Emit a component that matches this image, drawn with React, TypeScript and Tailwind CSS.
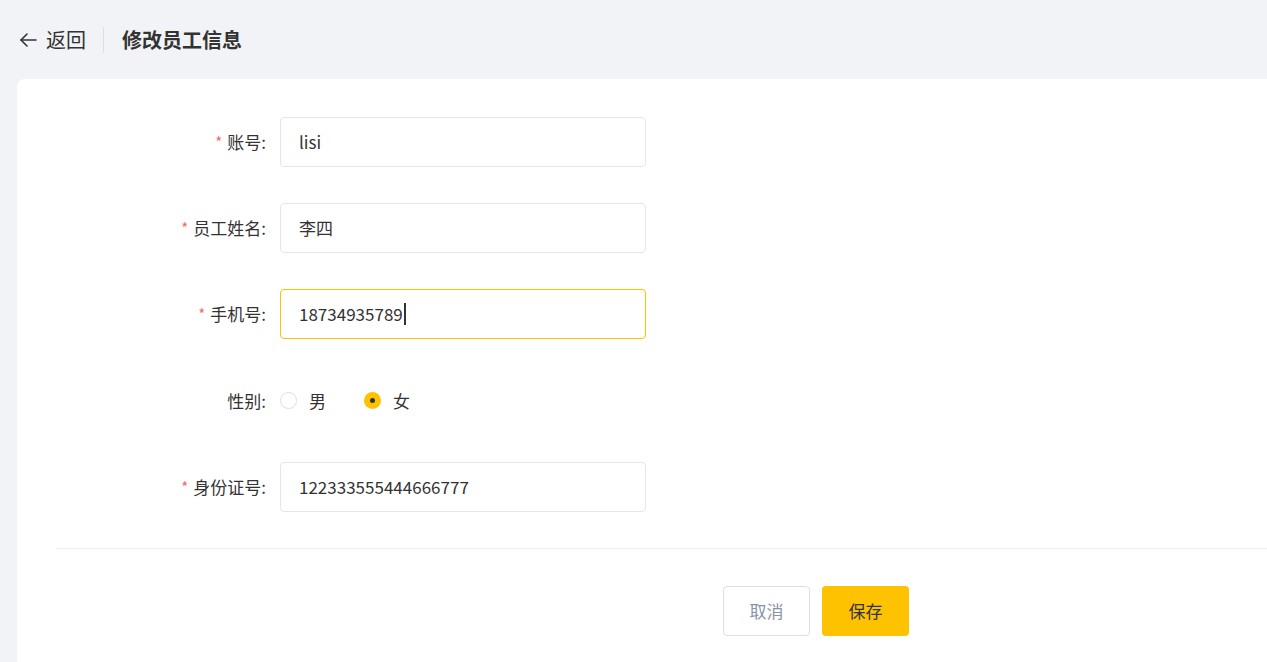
import React from 'react';

const font = { fontFamily: '"Noto Sans CJK SC", "Noto Sans", sans-serif' };

interface FieldProps {
  label: string;
  required?: boolean;
  tall?: boolean;
  children: React.ReactNode;
}

const Field: React.FC<FieldProps> = ({ label, required, tall, children }) => (
  <div className={`flex items-center ${tall ? 'h-[51px]' : 'h-[50px]'}`}>
    <div className="w-[249px] flex items-center justify-end text-[17px] text-[#333333]">
      {required && <span className="text-[#f56c6c] text-[15px] mr-[5px]">*</span>}
      <span>{label}:</span>
    </div>
    <div className="ml-[14px] flex items-center">{children}</div>
  </div>
);

const TextBox: React.FC<{ value: string; focused?: boolean }> = ({ value, focused }) => (
  <div
    className={`w-[366px] h-[50px] rounded-[4px] border flex items-center pl-[18px] text-[17px] text-[#333333] bg-white ${
      focused ? 'border-[#ffc200]' : 'border-[#e4e6eb]'
    }`}
  >
    <span>{value}</span>
    {focused && <span className="inline-block w-[2px] h-[22px] bg-[#333333] ml-[1px]" />}
  </div>
);

const Radio: React.FC<{ label: string; checked?: boolean }> = ({ label, checked }) => (
  <div className="flex items-center mr-[38px]">
    {checked ? (
      <span className="w-[17px] h-[17px] rounded-full bg-[#ffc200] flex items-center justify-center">
        <span className="w-[5px] h-[5px] rounded-full bg-[#333333]" />
      </span>
    ) : (
      <span className="w-[17px] h-[17px] rounded-full border border-[#dcdfe6] bg-white" />
    )}
    <span className="ml-[12px] text-[17px] text-[#333333]">{label}</span>
  </div>
);

export default function App() {
  return (
    <div className="w-full h-screen bg-[#f2f3f7] overflow-hidden" style={font}>
      <div className="h-[79px] flex items-center pl-[19px]">
        <svg width="18" height="16" viewBox="0 0 18 16" fill="none" stroke="#333333" strokeWidth="1.6" strokeLinecap="round" strokeLinejoin="round">
          <path d="M17 8H2" />
          <path d="M8 2L2 8l6 6" />
        </svg>
        <span className="ml-[9px] text-[20px] text-[#333333]">返回</span>
        <div className="w-px h-[26px] bg-[#dcdfe6] ml-[17px]" />
        <span className="ml-[18px] text-[20px] font-bold text-[#333333]">修改员工信息</span>
      </div>
      <div className="ml-[17px] w-[1598px] h-[583px] bg-white rounded-tl-[8px] rounded-tr-[8px] pt-[38px]">
        <div className="flex flex-col gap-[36px]">
          <Field label="账号" required>
            <TextBox value="lisi" />
          </Field>
          <Field label="员工姓名" required>
            <TextBox value="李四" />
          </Field>
          <Field label="手机号" required>
            <TextBox value="18734935789" focused />
          </Field>
          <Field label="性别" tall>
            <Radio label="男" />
            <Radio label="女" checked />
          </Field>
          <Field label="身份证号" required>
            <TextBox value="122333555444666777" />
          </Field>
        </div>
        <div className="mx-[39px] mt-[36px] h-px bg-[#f0f0f2]" />
        <div className="flex justify-center gap-[12px] mt-[37px]">
          <button className="w-[87px] h-[50px] rounded-[4px] border border-[#dcdfe6] bg-white text-[17px] text-[#8a92a6]">
            取消
          </button>
          <button className="w-[87px] h-[50px] rounded-[4px] bg-[#ffc200] text-[17px] text-[#333333]">
            保存
          </button>
        </div>
      </div>
    </div>
  );
}
